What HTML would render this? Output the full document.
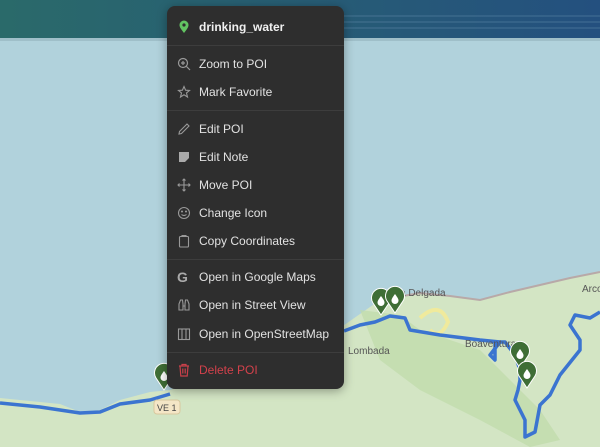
<!DOCTYPE html>
<html><head><style>
body{margin:0;width:600px;height:447px;overflow:hidden;position:relative;font-family:"Liberation Sans",sans-serif;background:#b1d2dc}
.menu{position:absolute;left:167px;top:6px;width:177px;height:383px;background:#2e2e2e;border-radius:8px;box-shadow:0 2px 10px rgba(0,0,0,.35)}
.it{position:absolute;left:32px;font-size:12px;color:#e2e2e2;line-height:14px}
.ic{position:absolute;left:10px;width:14px;height:14px}
.hr{position:absolute;left:0;right:0;height:1px;background:#3d3d3d}
</style></head><body>
<svg width="600" height="447" style="position:absolute;left:0;top:0">
<defs><linearGradient id="g" x1="0" x2="1"><stop offset="0" stop-color="#2a6a6a"/><stop offset="1" stop-color="#24507f"/></linearGradient>
<g id="pin"><path d="M0 0 L-8 -12 A9.5 9.5 0 1 1 8 -12 Z" fill="#3f6e36" stroke="#fff" stroke-width="1"/><path d="M0 -19 C-3 -15 -3.5 -13.5 -3.5 -12.5 a3.5 3.5 0 0 0 7 0 C3.5 -13.5 3 -15 0 -19z" fill="#fff"/></g></defs>
<rect width="600" height="38" fill="url(#g)"/>
<path d="M340 16 H600 M340 22 H600 M340 28 H600" stroke="#5a85a5" stroke-width="1" opacity=".6"/>
<rect y="38" width="600" height="3" fill="#9fbfc9"/>
<path d="M0 398 L60 404 L80 412 L100 410 L120 400 L150 392 L170 390 L250 360 L340 328 L380 300 L420 293 L450 296 L480 300 L510 292 L540 285 L570 278 L600 272 V447 H0Z" fill="#d3e5c4"/>
<path d="M380 300 L420 293 L450 296 L480 300 L510 292 L540 285 L570 278 L600 272" stroke="#b8a9a8" stroke-width="2" fill="none"/>
<path d="M360 310 L400 315 L420 330 L450 340 L480 350 L500 370 L520 390 L540 410 L560 440 L530 447 L480 420 L420 390 L380 360Z" fill="#bfdcaa" opacity=".7"/>
<path d="M420 318 Q440 300 448 322 Q440 340 430 330" stroke="#f0ea9c" stroke-width="4" fill="none"/>
<path d="M0 403 L40 407 L80 413 L100 412 L120 404 L150 400 L170 394 M344 331 L360 325 L375 322 L390 316 L405 318 L410 330 L440 335 L480 340 L500 342 L490 355 L495 360 L495 342 L505 342 L515 355 L520 370 L520 380 L518 390 L515 400 L525 420 L525 437 L535 432 L540 405 L550 395 L560 375 L580 350 L580 340 L570 325 L575 315 L590 318 L600 312" stroke="#3b74d0" stroke-width="3.5" fill="none" stroke-linejoin="round"/>
<rect x="154" y="400" width="26" height="14" rx="3" fill="#f4e6c6" stroke="#d8c89e"/>
<text x="157" y="411" font-size="9" fill="#444" font-family="Liberation Sans">VE 1</text>
<text x="348" y="354" font-size="10" fill="#555" font-family="Liberation Sans">Lombada</text>
<text x="400" y="296" font-size="10" fill="#555" font-family="Liberation Sans">a Delgada</text>
<text x="465" y="347" font-size="10" fill="#555" font-family="Liberation Sans">Boaventura</text>
<text x="582" y="292" font-size="10" fill="#555" font-family="Liberation Sans">Arco</text>
<use href="#pin" x="381" y="315"/><use href="#pin" x="395" y="313"/>
<use href="#pin" x="520" y="368"/><use href="#pin" x="527" y="388"/>
<use href="#pin" x="164" y="390"/>
</svg>
<div class="menu">
<svg class="ic" style="top:14px" viewBox="0 0 14 14"><path d="M7 13 C3 8 2.5 6.5 2.5 5 a4.5 4.5 0 0 1 9 0 c0 1.5-.5 3-4.5 8z" fill="#62c462"/><circle cx="7" cy="5" r="1.6" fill="#2e2e2e"/></svg>
<div class="it" style="top:14px;font-weight:bold;color:#f0f0f0">drinking_water</div>
<div class="hr" style="top:39px"></div>
<svg class="ic" style="top:51px" viewBox="0 0 14 14" fill="none" stroke="#999" stroke-width="1.2"><circle cx="6" cy="6" r="4.5"/><path d="M9.5 9.5 13 13 M6 4v4 M4 6h4"/></svg>
<div class="it" style="top:51px">Zoom to POI</div>
<svg class="ic" style="top:79px" viewBox="0 0 14 14" fill="none" stroke="#999" stroke-width="1.1"><path d="M7 1.5 8.6 5.2 12.5 5.5 9.5 8 10.5 12 7 9.8 3.5 12 4.5 8 1.5 5.5 5.4 5.2Z"/></svg>
<div class="it" style="top:79px">Mark Favorite</div>
<div class="hr" style="top:104px"></div>
<svg class="ic" style="top:116px" viewBox="0 0 14 14" fill="none" stroke="#999" stroke-width="1.1"><path d="M2 12 2.5 9.5 10 2 12 4 4.5 11.5Z"/></svg>
<div class="it" style="top:116px">Edit POI</div>
<svg class="ic" style="top:144px" viewBox="0 0 14 14"><path d="M2 2h10v6l-4 4H2z" fill="#aaa"/></svg>
<div class="it" style="top:144px">Edit Note</div>
<svg class="ic" style="top:172px" viewBox="0 0 14 14" fill="none" stroke="#999" stroke-width="1.1"><path d="M7 1v12M1 7h12M5.5 2.5 7 1l1.5 1.5M5.5 11.5 7 13l1.5-1.5M2.5 5.5 1 7l1.5 1.5M11.5 5.5 13 7l-1.5 1.5"/></svg>
<div class="it" style="top:172px">Move POI</div>
<svg class="ic" style="top:200px" viewBox="0 0 14 14" fill="none" stroke="#999" stroke-width="1.1"><circle cx="7" cy="7" r="5.5"/><path d="M4.5 8.5q2.5 2 5 0"/><circle cx="5" cy="5.5" r=".5"/><circle cx="9" cy="5.5" r=".5"/></svg>
<div class="it" style="top:200px">Change Icon</div>
<svg class="ic" style="top:228px" viewBox="0 0 14 14" fill="none" stroke="#999" stroke-width="1.1"><rect x="2.5" y="2.5" width="9" height="10.5" rx="1"/><path d="M5 2.5V1.5h4v1"/></svg>
<div class="it" style="top:228px">Copy Coordinates</div>
<div class="hr" style="top:253px"></div>
<div class="it" style="top:264px;left:10px;font-weight:bold;color:#aaa;font-size:14px">G</div>
<div class="it" style="top:264px">Open in Google Maps</div>
<svg class="ic" style="top:292px" viewBox="0 0 14 14" fill="none" stroke="#999" stroke-width="1.1"><path d="M2 12V6l1.5-4h2l.5 4v6zM12 12V6l-1.5-4h-2l-.5 4v6zM6 8h2"/></svg>
<div class="it" style="top:292px">Open in Street View</div>
<svg class="ic" style="top:321px" viewBox="0 0 14 14" fill="none" stroke="#999" stroke-width="1.1"><rect x="1.5" y="2" width="11" height="10.5"/><path d="M5 2v10.5M9 2v10.5"/></svg>
<div class="it" style="top:321px">Open in OpenStreetMap</div>
<div class="hr" style="top:346px"></div>
<svg class="ic" style="top:357px" viewBox="0 0 14 14" fill="none" stroke="#c9404a" stroke-width="1.2"><path d="M2 3h10M5 3V1.5h4V3M3 3l.8 10h6.4L11 3M5.8 5.5v5M8.2 5.5v5"/></svg>
<div class="it" style="top:357px;color:#d2414b">Delete POI</div>
</div>
</body></html>
